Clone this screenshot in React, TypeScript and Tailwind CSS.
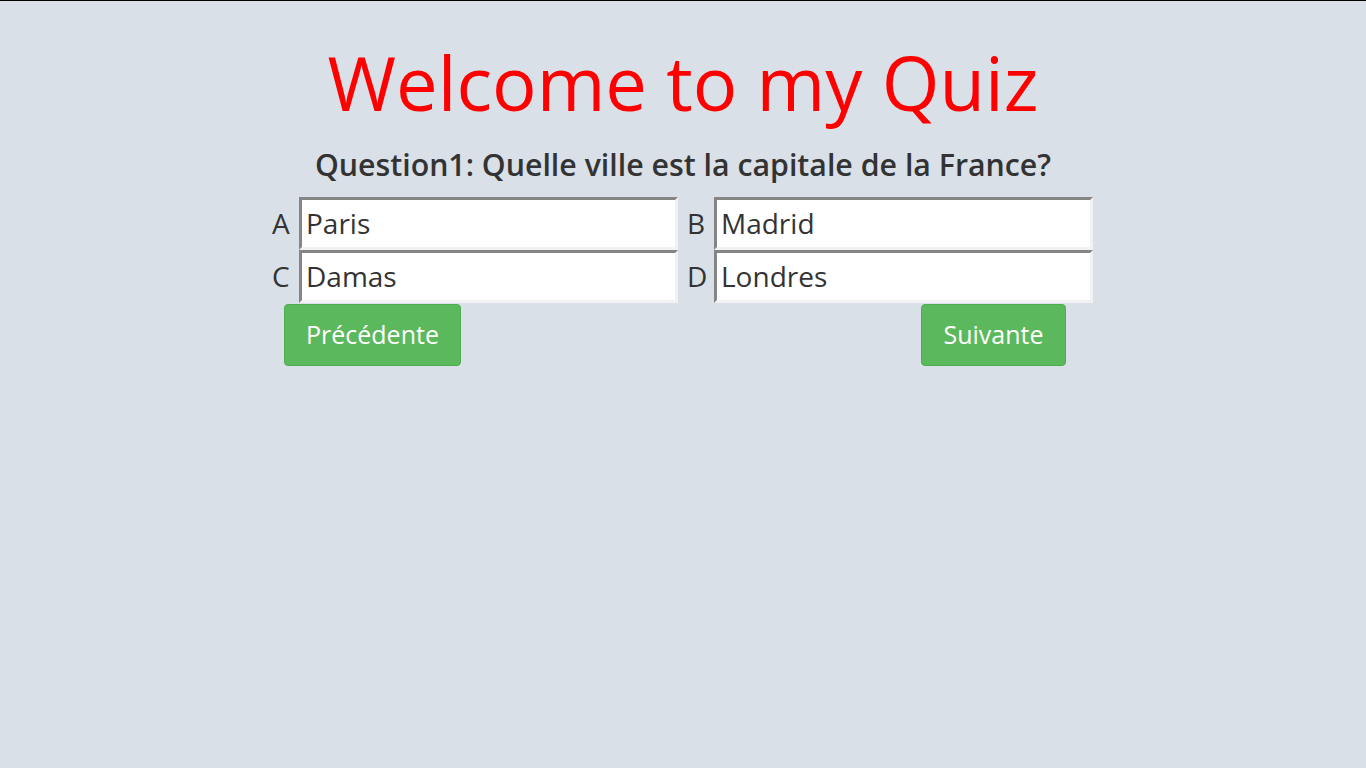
const FONT = "'Open Sans', 'Noto Sans', sans-serif";

const ANSWERS = [
  [
    { key: "A", value: "Paris" },
    { key: "B", value: "Madrid" },
  ],
  [
    { key: "C", value: "Damas" },
    { key: "D", value: "Londres" },
  ],
];

export default function App() {
  return (
    <div
      className="min-h-screen border-t border-black bg-[#d9e0e7] text-[#333]"
      style={{ fontFamily: FONT }}
    >
      <h1 className="mt-[45px] text-center text-[74.2px] leading-none text-[#ff0000]">
        Welcome to my Quiz
      </h1>

      <h2 className="mt-[30px] text-center text-[30.3px] font-semibold leading-none">
        Question1: Quelle ville est la capitale de la France?
      </h2>

      <div className="mx-auto mt-[16px] w-[822px]">
        {ANSWERS.map((row, i) => (
          <div key={i} className="flex items-center gap-[9px]">
            {row.map((a) => (
              <label key={a.key} className="flex items-center text-[28px]">
                <span className="w-[27px]">{a.key}</span>
                <input
                  readOnly
                  value={a.value}
                  className="h-[53px] w-[379px] border-[3px] border-t-[#858585] border-l-[#858585] border-r-[#f2f2f2] border-b-[#f2f2f2] bg-white px-[4px] text-[28px] text-[#333] outline-none"
                />
              </label>
            ))}
          </div>
        ))}

        <div className="mt-px flex justify-between pl-[12px] pr-[28px]">
          <button className="h-[62px] rounded-[4px] border border-[#4cae4c] bg-[#5cb85c] px-[21px] text-[25px] text-white">
            Précédente
          </button>
          <button className="h-[62px] rounded-[4px] border border-[#4cae4c] bg-[#5cb85c] px-[21.5px] text-[25px] text-white">
            Suivante
          </button>
        </div>
      </div>
    </div>
  );
}
